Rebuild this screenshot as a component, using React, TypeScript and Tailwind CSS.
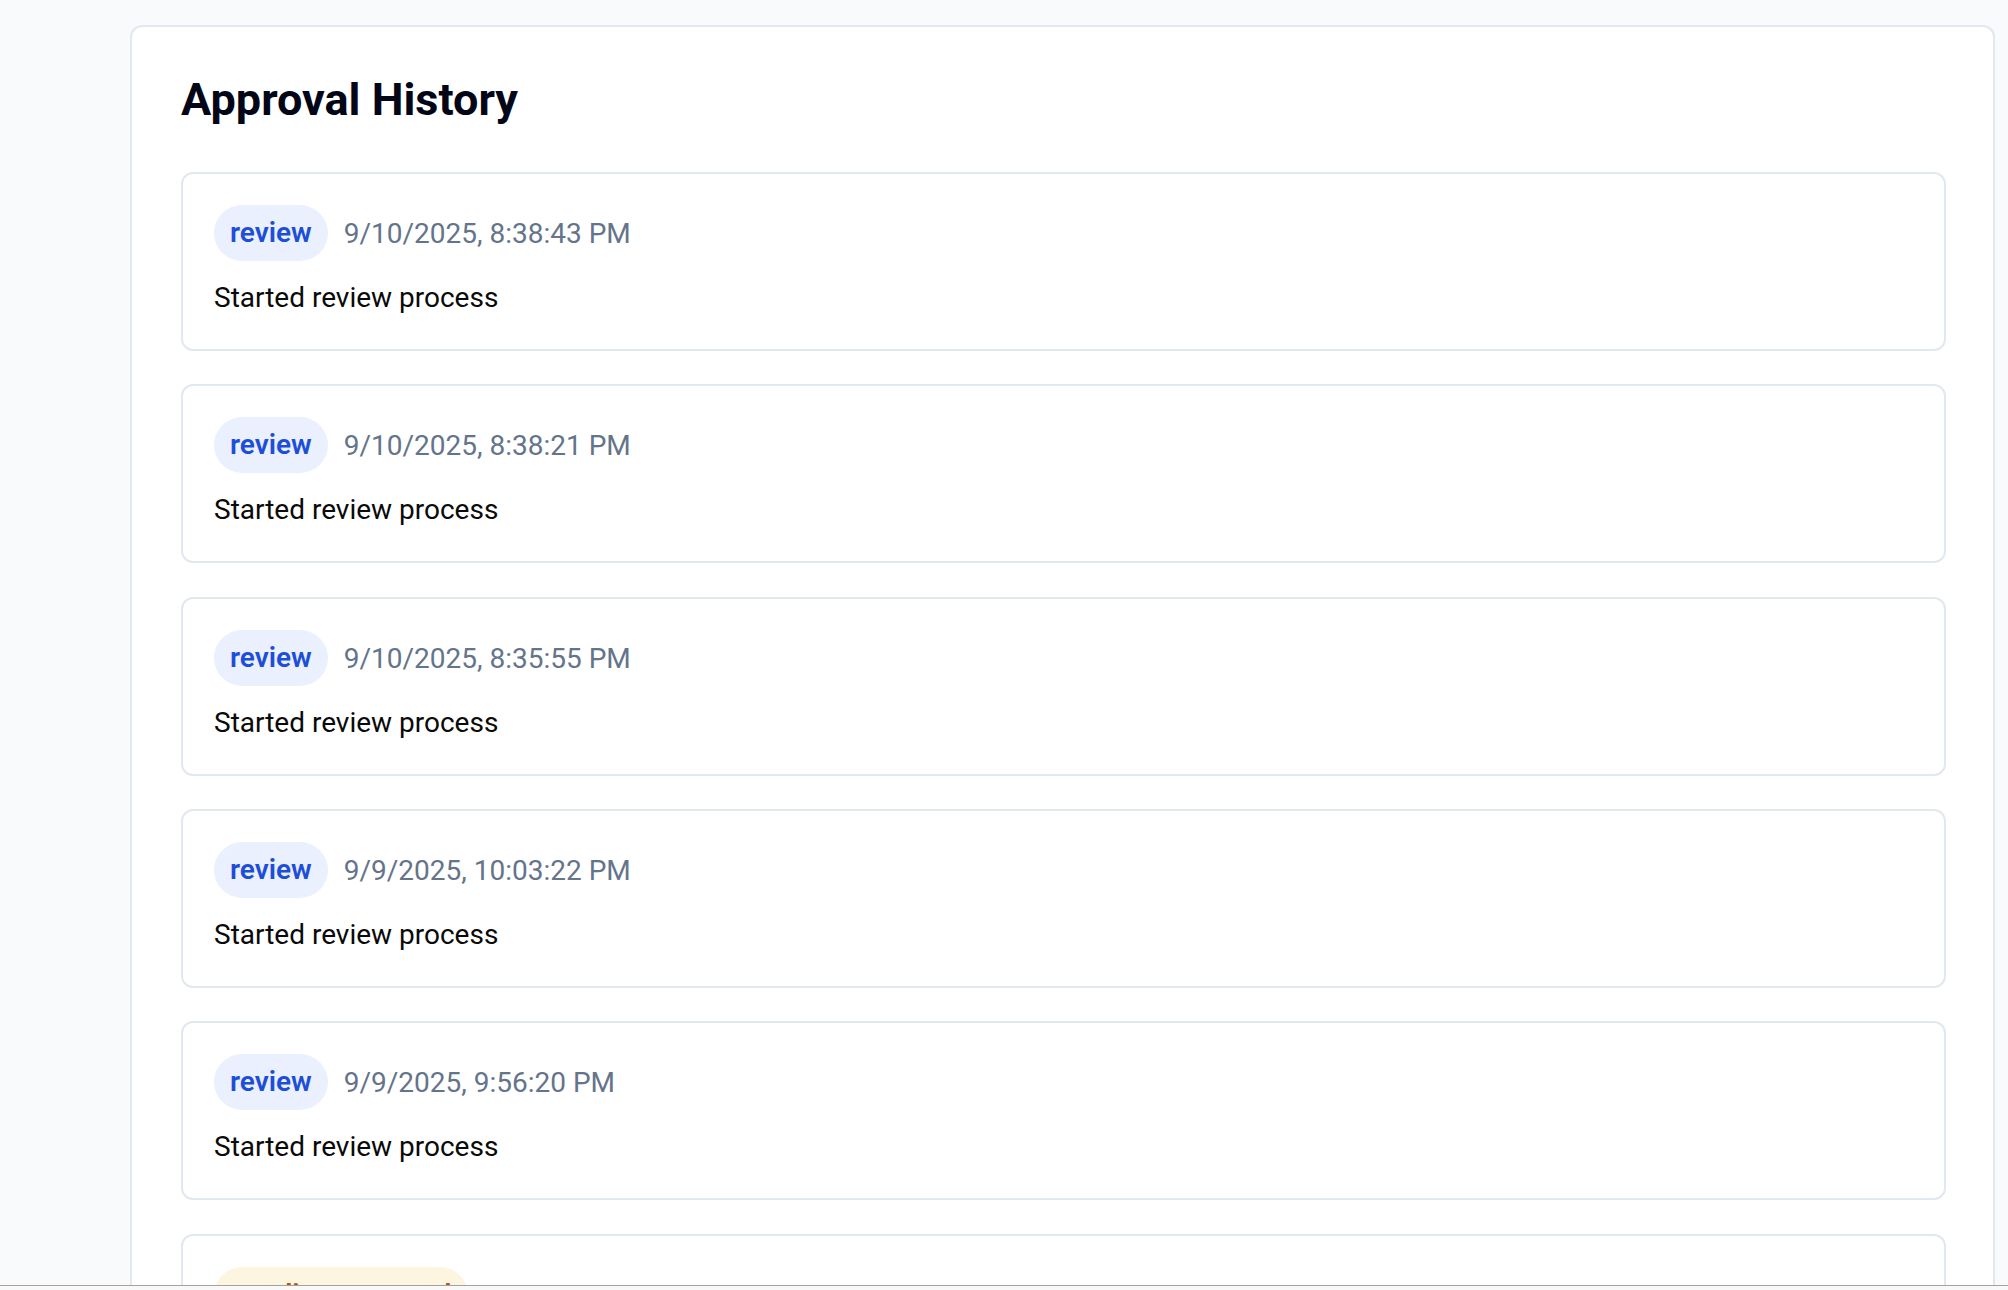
import React from "react";

interface HistoryEntry {
  action: string;
  timestamp: string;
  comment: string;
}

const history: HistoryEntry[] = [
  { action: "review", timestamp: "9/10/2025, 8:38:43 PM", comment: "Started review process" },
  { action: "review", timestamp: "9/10/2025, 8:38:21 PM", comment: "Started review process" },
  { action: "review", timestamp: "9/10/2025, 8:35:55 PM", comment: "Started review process" },
  { action: "review", timestamp: "9/9/2025, 10:03:22 PM", comment: "Started review process" },
  { action: "review", timestamp: "9/9/2025, 9:56:20 PM", comment: "Started review process" },
  { action: "pending_approval", timestamp: "9/9/2025, 9:54:14 PM", comment: "Submitted for approval" },
];

const ActionBadge = ({ action }: { action: string }) => {
  const isReview = action === "review";
  return (
    <span
      className={
        isReview
          ? "inline-flex h-[56px] items-center rounded-full bg-[#eaf0fd] px-[16px] text-[28px] font-semibold text-[#1d4ed8]"
          : "inline-flex h-[56px] items-center rounded-full bg-[#fcf5e0] px-[16px] text-[28px] font-semibold text-[#b45309]"
      }
    >
      {action}
    </span>
  );
};

const App = () => {
  return (
    <div
      className="flex h-[1290px] flex-col overflow-hidden bg-[#f8fafc]"
      style={{ fontFamily: "Roboto, 'Liberation Sans', sans-serif" }}
    >
      <main className="min-h-0 flex-1 overflow-hidden pl-[130px] pr-[13px] pt-[25px]">
        <div className="rounded-[12px] border-2 border-[#e2e8f0] bg-white pl-[49px] pr-[47px] pt-[46px]">
          <h2 className="mb-[45px] text-[45px] font-bold leading-[54px] text-[#020617]">
            Approval History
          </h2>
          <div className="flex flex-col gap-[33.35px]">
            {history.map((entry, i) => (
              <div
                key={i}
                className="rounded-[12px] border-2 border-[#e2e8f0] px-[31px] pb-[30px] pt-[31px]"
              >
                <div className="flex h-[56px] items-center gap-4">
                  <ActionBadge action={entry.action} />
                  <span className="pt-[2px] text-[28px] text-[#64748b]">{entry.timestamp}</span>
                </div>
                <p className="mt-[16px] text-[28px] leading-[42px] text-[#0a0a0a]">
                  {entry.comment}
                </p>
              </div>
            ))}
          </div>
        </div>
      </main>
      <div className="h-[5px] shrink-0 border-t border-[#a3a3a3] bg-[#f9f9f9]" />
    </div>
  );
};

export default App;
